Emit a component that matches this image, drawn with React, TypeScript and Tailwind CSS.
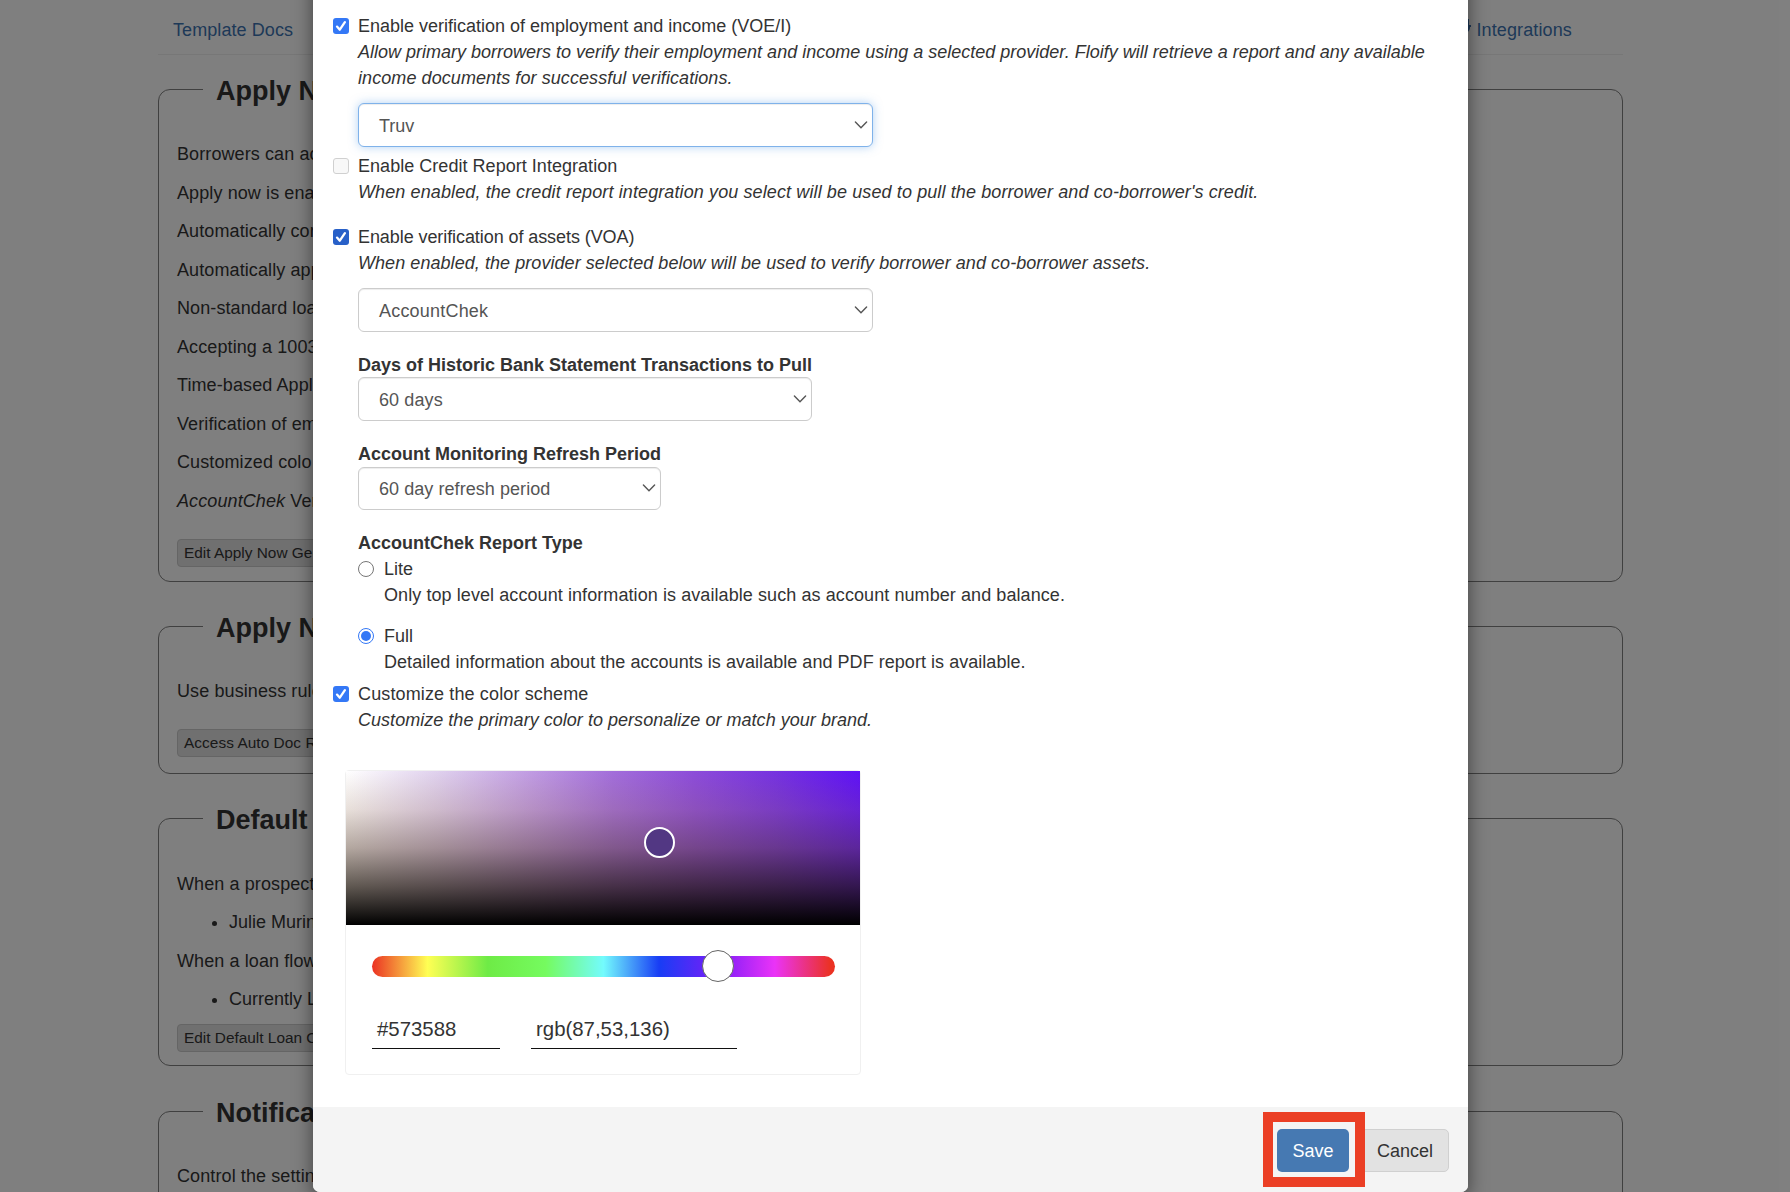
import type { ReactNode } from "react";

function Panel({ title, className, children }: { title: string; className: string; children: ReactNode }) {
  return (
    <fieldset className={`min-w-0 rounded-[12px] border border-[#808080] pl-[18px] ${className}`}>
      <legend className="ml-[26px] px-[13px] pt-[4px] text-[27px] leading-[24px] font-bold whitespace-nowrap">
        {title}
      </legend>
      {children}
    </fieldset>
  );
}

function Rows({ items }: { items: ReactNode[] }) {
  return (
    <div>
      {items.map((t, i) => (
        <p key={i} className="h-[38.5px] leading-[38.5px] tracking-[0.1px] whitespace-nowrap">
          {t}
        </p>
      ))}
    </div>
  );
}

function GreyButton({ children, className }: { children: ReactNode; className: string }) {
  return (
    <button
      className={`block h-[28px] w-[200px] rounded-[4px] border border-[#cacaca] bg-[#e0e0e0] pl-[6px] text-left text-[15.4px] leading-[26px] whitespace-nowrap ${className}`}
    >
      {children}
    </button>
  );
}

function Check({ state, className }: { state: "on" | "active" | "off"; className: string }) {
  const tone =
    state === "on" ? "bg-[#3478f6]" : state === "active" ? "bg-[#2860c8]" : "border border-[#d0d0d0] bg-[#f8f8f8]";
  return (
    <span className={`block size-[16px] shrink-0 rounded-[3px] ${tone} ${className}`}>
      {state !== "off" && (
        <svg viewBox="0 0 16 16" className="size-[16px]" fill="none" stroke="white" strokeWidth="2.3" strokeLinecap="round" strokeLinejoin="round">
          <path d="M4 8.6 6.8 11.7 11.9 4.2" />
        </svg>
      )}
    </span>
  );
}

function Select({ value, className, focused }: { value: string; className: string; focused?: boolean }) {
  const tone = focused
    ? "border-[#7fb2ea] shadow-[inset_0_1px_1px_rgba(0,0,0,0.075),0_0_10px_rgba(102,165,233,0.5)]"
    : "border-[#cccccc] shadow-[inset_0_1px_1px_rgba(0,0,0,0.075)]";
  return (
    <div
      className={`flex items-center justify-between rounded-[6px] border bg-white pr-[4px] pl-[20px] text-[#555555] ${tone} ${className}`}
    >
      <span className="pt-px">{value}</span>
      <svg viewBox="0 0 14 8" className="mb-px h-[8px] w-[14px]" fill="none" stroke="#555" strokeWidth="1.4" strokeLinecap="round">
        <path d="M1.4 1 7 6.800 12.6 1" />
      </svg>
    </div>
  );
}

type OptionProps = {
  state: "on" | "active" | "off";
  label: ReactNode;
  hint: ReactNode;
  className: string;
  children?: ReactNode;
};

function Option({ state, label, hint, className, children }: OptionProps) {
  return (
    <div className={`flex ${className}`}>
      <Check state={state} className="mt-[5px] mr-[9px]" />
      <div>
        <p>{label}</p>
        <p className="italic">{hint}</p>
        {children}
      </div>
    </div>
  );
}

function Radio({ on, label, hint, className }: { on?: boolean; label: string; hint: ReactNode; className: string }) {
  return (
    <div className={`flex ${className}`}>
      <span
        className={`mt-[5px] mr-[10px] flex size-[16px] shrink-0 items-center justify-center rounded-full border ${on ? "border-[#3478f6]" : "border-[#767676]"}`}
      >
        {on && <span className="size-[10px] rounded-full bg-[#3478f6]" />}
      </span>
      <div>
        <p>{label}</p>
        <p>{hint}</p>
      </div>
    </div>
  );
}

function ColorPicker() {
  return (
    <div className="ml-[12px] h-[305px] w-[516px] rounded-[4px] border border-[#f0f0f0]">
      <div className="relative h-[154px] bg-[linear-gradient(to_top,#000_0%,rgba(34,24,14,0.72)_25%,rgba(88,62,44,0.45)_50%,rgba(140,100,70,0.2)_75%,transparent_100%),linear-gradient(to_right,#ffffff_0%,#dfd0ee_18%,#c09be3_36%,#a26ddb_52%,#8c4bda_68%,#7531e1_84%,#5e11f7_100%)]">
        <span className="absolute top-[56px] left-[298px] size-[31px] rounded-full border-2 border-white bg-[#523783]" />
      </div>
      <div className="relative mt-[31px] ml-[26px] h-[21px] w-[463px] rounded-full bg-[linear-gradient(to_right,#eb3223_0%,#ffff54_12%,#6eeb46_25%,#75fb5f_37.5%,#73fbfd_50%,#183df5_62%,#7d1cf8_75%,#ea33f7_87%,#eb3223_99%)]">
        <span className="absolute top-[-6px] left-[330px] size-[32px] rounded-full border border-[#666] bg-white" />
      </div>
      <div className="mt-[33px] flex gap-[31px] pl-[26px] text-[20.4px] leading-[38px]">
        <div className="h-[39px] w-[128px] border-b border-[#111] pl-[5px]">#573588</div>
        <div className="h-[39px] w-[206px] border-b border-[#111] pl-[5px]">rgb(87,53,136)</div>
      </div>
    </div>
  );
}

export default function App() {
  return (
    <div className="relative h-[1192px] w-[1790px] overflow-hidden bg-white font-['Liberation_Sans',Arial,sans-serif] text-[18px] leading-[26px] text-[#333333]">
      <main className="ml-[158px] w-[1465px]">
        <nav className="flex h-[55px] items-start justify-between border-b border-[#eeeeee] pt-[17px] pr-[51px] pl-[15px] text-[#3d73b0]">
          <span className="tracking-[0.08px]">Template Docs</span>
          <span className="flex items-center tracking-[0.12px]">
            <svg viewBox="0 0 18 18" className="mr-[5px] size-[18px] -translate-y-[2px]" fill="currentColor">
              <path d="M3 0h3v6H3zM13.500 0h2.500v6h-2.500zM1 6h17v2h-1c0 4-3 6.500-6 7v3H8v-3C4 14.500 2 12 2 8H1Z" />
            </svg>
            Integrations
          </span>
        </nav>
        <Panel title="Apply N" className="mt-[20px] h-[507px]">
          <div className="pt-[32px]">
            <Rows
              items={[
                "Borrowers can ac",
                "Apply now is ena",
                "Automatically cor",
                "Automatically app",
                "Non-standard loa",
                "Accepting a 1003",
                "Time-based Appl",
                "Verification of em",
                "Customized colo",
                <>
                  <i>AccountChek</i> Ver
                </>,
              ]}
            />
            <GreyButton className="mt-[19px]">Edit Apply Now Ge</GreyButton>
          </div>
        </Panel>
        <Panel title="Apply N" className="mt-[30px] h-[162px]">
          <div className="pt-[32px]">
            <Rows items={["Use business rule"]} />
            <GreyButton className="mt-[18px] tracking-[0.05px]">Access Auto Doc R</GreyButton>
          </div>
        </Panel>
        <Panel title="Default" className="mt-[30px] h-[262px]">
          <div className="pt-[32.5px]">
            <Rows items={["When a prospect"]} />
            <ul className="list-disc pl-[52px] leading-[38.5px]">
              <li>Julie Murin</li>
            </ul>
            <Rows items={["When a loan flow"]} />
            <ul className="list-disc pl-[52px] leading-[38.5px]">
              <li>Currently L</li>
            </ul>
            <GreyButton className="mt-[5.5px]">Edit Default Loan O</GreyButton>
          </div>
        </Panel>
        <Panel title="Notifica" className="mt-[31px] h-[200px]">
          <div className="pt-[32px]">
            <Rows items={["Control the settin"]} />
          </div>
        </Panel>
      </main>

      <div className="absolute inset-0 bg-black/50" />

      <div className="absolute top-[-40px] left-[313px] flex h-[1232px] w-[1155px] flex-col rounded-[7px] bg-white pt-[53px] shadow-[0_6px_19px_rgba(0,0,0,0.5)]">
        <div className="h-[1094px] pl-[20px]">
          <Option
            state="on"
            className="h-[140px]"
            label="Enable verification of employment and income (VOE/I)"
            hint={
              <>
                Allow primary borrowers to verify their employment and income using a selected provider. Floify will retrieve a report and any available
                <br />
                <span className="tracking-[0.075px]">income documents for successful verifications.</span>
              </>
            }
          >
            <Select focused value="Truv" className="mt-[12px] h-[44px] w-[515px]" />
          </Option>
          <Option
            state="off"
            className="h-[71px]"
            label={<span className="tracking-[0.035px]">Enable Credit Report Integration</span>}
            hint={
              <span className="tracking-[0.11px]">
                When enabled, the credit report integration you select will be used to pull the borrower and co-borrower's credit.
              </span>
            }
          />
          <Option
            state="active"
            className="h-[457px]"
            label={<span className="tracking-[-0.08px]">Enable verification of assets (VOA)</span>}
            hint={
              <span className="tracking-[0.06px]">
                When enabled, the provider selected below will be used to verify borrower and co-borrower assets.
              </span>
            }
          >
            <Select value="AccountChek" className="mt-[12px] h-[44px] w-[515px] tracking-[0.2px]" />
            <p className="mt-[20px] h-[25px] font-bold">Days of Historic Bank Statement Transactions to Pull</p>
            <Select value="60 days" className="h-[44px] w-[454px] tracking-[0.1px]" />
            <p className="mt-[20px] font-bold">Account Monitoring Refresh Period</p>
            <Select value="60 day refresh period" className="h-[43px] w-[303px] tracking-[0.06px]" />
            <p className="mt-[20px] font-bold">AccountChek Report Type</p>
            <Radio
              className="h-[67px]"
              label="Lite"
              hint={
                <span className="tracking-[0.08px]">
                  Only top level account information is available such as account number and balance.
                </span>
              }
            />
            <Radio
              on
              className="h-[52px]"
              label="Full"
              hint={
                <span className="tracking-[0.04px]">
                  Detailed information about the accounts is available and PDF report is available.
                </span>
              }
            />
          </Option>
          <Option
            state="on"
            className="h-[89px]"
            label={<span className="tracking-[0.13px]">Customize the color scheme</span>}
            hint={<span className="tracking-[0.03px]">Customize the primary color to personalize or match your brand.</span>}
          />
          <ColorPicker />
        </div>
        <div className="flex h-[85px] items-start justify-end gap-[12px] rounded-b-[7px] bg-[#f4f4f4] pt-[22px] pr-[19px]">
          <div className="relative">
            <button className="block h-[43px] w-[72px] rounded-[5px] bg-[#4679b2] pt-px text-white">Save</button>
            <span className="absolute top-[-17px] left-[-14px] z-10 h-[75px] w-[102px] border-[10px] border-[#eb3f25]" />
          </div>
          <button className="block h-[43px] w-[88px] rounded-[5px] border border-[#d0d0d0] bg-[#e2e2e2] pt-px">Cancel</button>
        </div>
      </div>
    </div>
  );
}
